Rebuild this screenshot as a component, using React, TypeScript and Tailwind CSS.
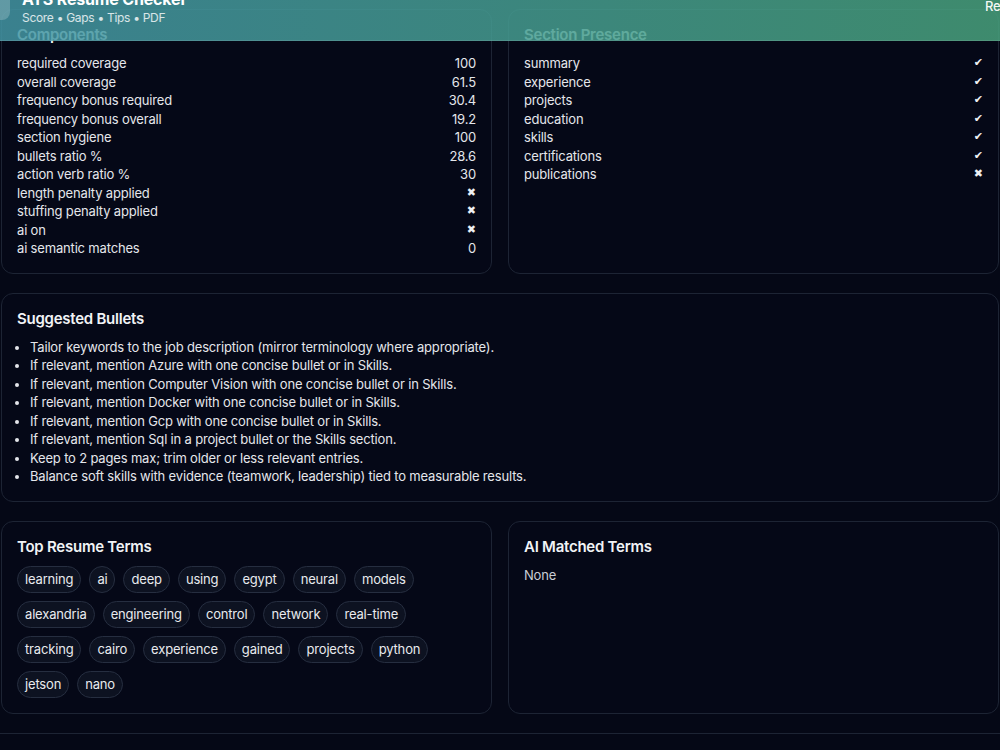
import React from 'react';

const components: [string, string][] = [
  ['required coverage', '100'],
  ['overall coverage', '61.5'],
  ['frequency bonus required', '30.4'],
  ['frequency bonus overall', '19.2'],
  ['section hygiene', '100'],
  ['bullets ratio %', '28.6'],
  ['action verb ratio %', '30'],
  ['length penalty applied', '✖'],
  ['stuffing penalty applied', '✖'],
  ['ai on', '✖'],
  ['ai semantic matches', '0'],
];

const sections: [string, boolean][] = [
  ['summary', true],
  ['experience', true],
  ['projects', true],
  ['education', true],
  ['skills', true],
  ['certifications', true],
  ['publications', false],
];

const bullets = [
  'Tailor keywords to the job description (mirror terminology where appropriate).',
  'If relevant, mention Azure with one concise bullet or in Skills.',
  'If relevant, mention Computer Vision with one concise bullet or in Skills.',
  'If relevant, mention Docker with one concise bullet or in Skills.',
  'If relevant, mention Gcp with one concise bullet or in Skills.',
  'If relevant, mention Sql in a project bullet or the Skills section.',
  'Keep to 2 pages max; trim older or less relevant entries.',
  'Balance soft skills with evidence (teamwork, leadership) tied to measurable results.',
];

const terms = [
  'learning', 'ai', 'deep', 'using', 'egypt', 'neural', 'models',
  'alexandria', 'engineering', 'control', 'network', 'real-time',
  'tracking', 'cairo', 'experience', 'gained', 'projects', 'python',
  'jetson', 'nano',
];

const Card: React.FC<{ title: string; children: React.ReactNode }> = ({ title, children }) => (
  <section className="rounded-xl border border-[#1d2434] bg-[#050817] p-[15px]">
    <h3 className="mb-[9px] text-[15px] font-semibold leading-5 tracking-[-0.25px] text-[#f1f3f6]">{title}</h3>
    {children}
  </section>
);

const Glyph: React.FC<{ ch: string }> = ({ ch }) => (
  <span className="font-['DejaVu_Sans',sans-serif] text-[11px] tracking-normal text-[#eef0f3]">{ch}</span>
);

export default function App() {
  return (
    <div className="relative min-h-[750px] overflow-hidden bg-[#050816] font-['Inter',sans-serif] text-[13px] tracking-[-0.17px] text-[#e4e6eb]">
      {/* Sticky header, scrolled over content */}
      <header className="absolute inset-x-0 top-0 z-10 h-[41px] overflow-hidden border-b border-white/10 bg-gradient-to-r from-[#4396a4]/85 to-[#48a27d]/85">
        <div className="-mt-[12px] flex items-start justify-between">
          <div className="flex items-start">
            <div className="-ml-[22px] flex h-8 w-8 items-center justify-center rounded-lg bg-white/20 text-[15px] font-bold text-white">
              A
            </div>
            <div className="ml-3 mt-[1px]">
              <div className="text-base font-bold leading-5 text-white">ATS Resume Checker</div>
              <div className="mt-px text-xs leading-4 tracking-[-0.3px] text-white/80">Score • Gaps • Tips • PDF</div>
            </div>
          </div>
          <div className="-mr-[19px] mt-[8px] text-[13px] font-medium leading-5 text-white/95">Reset</div>
        </div>
      </header>

      <main className="flex flex-col gap-[19px] px-px pt-[9px]">
        <div className="grid grid-cols-2 gap-4">
          <Card title="Components">
            <div className="flex flex-col">
              {components.map(([k, v]) => (
                <div key={k} className="flex items-center justify-between leading-[18.5px]">
                  <span>{k}</span>
                  {v === '✖' ? <Glyph ch={v} /> : <span>{v}</span>}
                </div>
              ))}
            </div>
          </Card>
          <Card title="Section Presence">
            <div className="flex flex-col">
              {sections.map(([k, ok]) => (
                <div key={k} className="flex items-center justify-between leading-[18.5px]">
                  <span>{k}</span>
                  <Glyph ch={ok ? '✔' : '✖'} />
                </div>
              ))}
            </div>
          </Card>
        </div>

        <Card title="Suggested Bullets">
          <ul className="list-disc pl-[13px] leading-[18.5px]">
            {bullets.map((b) => (
              <li key={b}>{b}</li>
            ))}
          </ul>
        </Card>

        <div className="grid grid-cols-2 gap-4">
          <Card title="Top Resume Terms">
            <div className="flex flex-wrap gap-2">
              {terms.map((t) => (
                <span
                  key={t}
                  className="rounded-full border border-[#262e40] bg-[#0d1221] px-[7px] py-1 leading-[17px] text-[#e8eaee]"
                >
                  {t}
                </span>
              ))}
            </div>
          </Card>
          <Card title="AI Matched Terms">
            <p className="leading-[18.5px] text-[#c9cdd5]">None</p>
          </Card>
        </div>

        <footer className="-mx-px h-[40px] border-t border-[#1d2434]" />
      </main>
    </div>
  );
}
